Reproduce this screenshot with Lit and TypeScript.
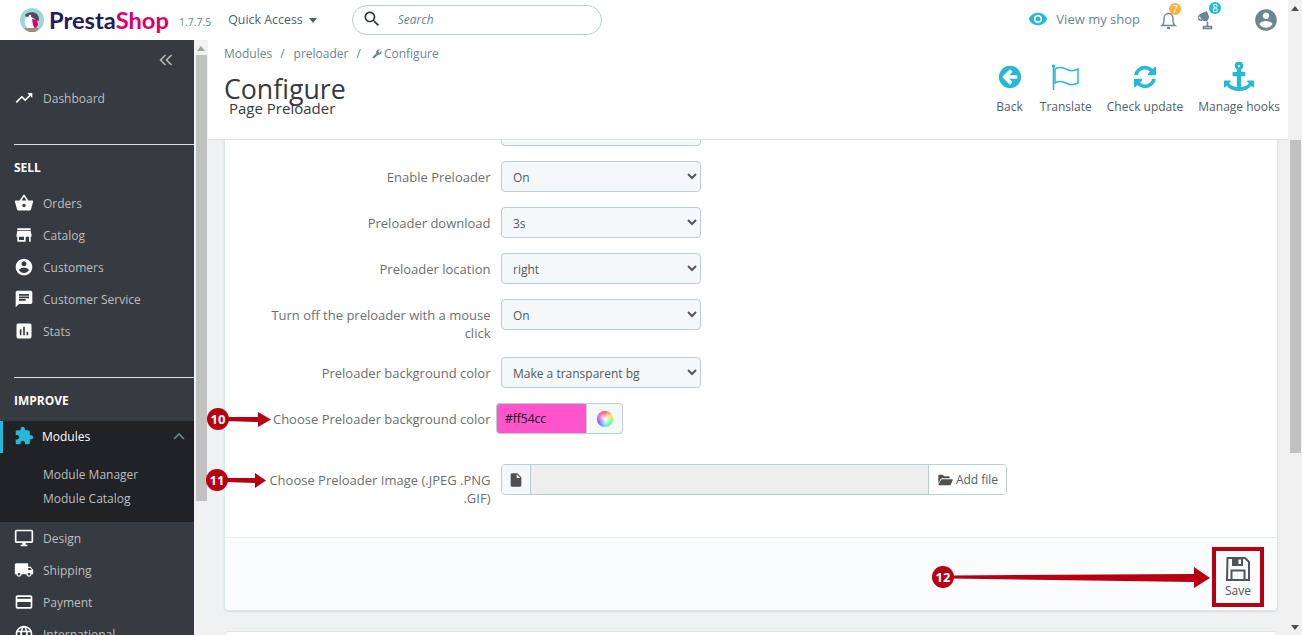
import { LitElement, html, css } from 'lit';
import { customElement } from 'lit/decorators.js';

const icon = (d: string, size = 20, box = 24) =>
  html`<svg class="ic" width=${size} height=${size} viewBox="0 0 ${box} ${box}" fill="currentColor"><path d=${d}></path></svg>`;

const P = {
  trend: 'M16 6l2.29 2.29-4.88 4.88-4-4L2 16.59 3.41 18l6-6 4 4 6.3-6.29L22 12V6z',
  basket: 'M17.21 9l-4.38-6.56c-.19-.28-.51-.42-.83-.42-.32 0-.64.14-.83.43L6.79 9H2c-.55 0-1 .45-1 1 0 .09.01.18.04.27l2.54 9.27c.23.84 1 1.46 1.92 1.46h13c.92 0 1.69-.62 1.93-1.46l2.54-9.27L23 10c0-.55-.45-1-1-1h-4.79zM9 9l3-4.4L15 9H9zm3 8c-1.1 0-2-.9-2-2s.9-2 2-2 2 .9 2 2-.9 2-2 2z',
  store: 'M20 4H4v2h16V4zm1 10v-2l-1-5H4l-1 5v2h1v6h10v-6h4v6h2v-6h1zm-9 4H6v-4h6v4z',
  account: 'M12 2C6.48 2 2 6.48 2 12s4.48 10 10 10 10-4.48 10-10S17.52 2 12 2zm0 3c1.66 0 3 1.34 3 3s-1.34 3-3 3-3-1.34-3-3 1.34-3 3-3zm0 14.2c-2.5 0-4.71-1.28-6-3.22.03-1.99 4-3.08 6-3.08 1.99 0 5.97 1.09 6 3.08-1.29 1.94-3.5 3.22-6 3.22z',
  chat: 'M20 2H4c-1.1 0-1.99.9-1.99 2L2 22l4-4h14c1.1 0 2-.9 2-2V4c0-1.1-.9-2-2-2zM6 9h12v2H6V9zm8 5H6v-2h8v2zm4-6H6V6h12v2z',
  stats: 'M19 3H5c-1.1 0-2 .9-2 2v14c0 1.1.9 2 2 2h14c1.1 0 2-.9 2-2V5c0-1.1-.9-2-2-2zM9 17H7v-7h2v7zm4 0h-2V7h2v10zm4 0h-2v-4h2v4z',
  puzzle: 'M20.5 11H19V7c0-1.1-.9-2-2-2h-4V3.5C13 2.12 11.88 1 10.5 1S8 2.12 8 3.5V5H4c-1.1 0-1.99.9-1.99 2v3.8H3.5c1.49 0 2.7 1.21 2.7 2.7s-1.21 2.7-2.7 2.7H2V20c0 1.1.9 2 2 2h3.8v-1.5c0-1.49 1.21-2.7 2.7-2.7 1.49 0 2.7 1.21 2.7 2.7V22H17c1.1 0 2-.9 2-2v-4h1.5c1.38 0 2.5-1.12 2.5-2.5S21.88 11 20.5 11z',
  desktop: 'M21 2H3c-1.1 0-2 .9-2 2v12c0 1.1.9 2 2 2h7v2H8v2h8v-2h-2v-2h7c1.1 0 2-.9 2-2V4c0-1.1-.9-2-2-2zm0 14H3V4h18v12z',
  truck: 'M20 8h-3V4H3c-1.1 0-2 .9-2 2v11h2c0 1.66 1.34 3 3 3s3-1.34 3-3h6c0 1.66 1.34 3 3 3s3-1.34 3-3h2v-5l-3-4zM6 18.5c-.83 0-1.5-.67-1.5-1.5s.67-1.5 1.5-1.5 1.5.67 1.5 1.5-.67 1.5-1.5 1.5zm13.5-9l1.96 2.5H17V9.5h2.5zm-1.5 9c-.83 0-1.5-.67-1.5-1.5s.67-1.5 1.5-1.5 1.5.67 1.5 1.5-.67 1.5-1.5 1.5z',
  card: 'M20 4H4c-1.11 0-1.99.89-1.99 2L2 18c0 1.11.89 2 2 2h16c1.11 0 2-.89 2-2V6c0-1.11-.89-2-2-2zm0 14H4v-6h16v6zm0-10H4V6h16v2z',
  globe: 'M11.99 2C6.47 2 2 6.48 2 12s4.47 10 9.99 10C17.52 22 22 17.52 22 12S17.52 2 11.99 2zm6.93 6h-2.95c-.32-1.25-.78-2.45-1.38-3.56 1.84.63 3.37 1.91 4.33 3.56zM12 4.04c.83 1.2 1.48 2.53 1.91 3.96h-3.82c.43-1.43 1.08-2.76 1.91-3.96zM4.26 14C4.1 13.36 4 12.69 4 12s.1-1.36.26-2h3.38c-.08.66-.14 1.32-.14 2 0 .68.06 1.34.14 2H4.26zm.82 2h2.95c.32 1.25.78 2.45 1.38 3.56-1.84-.63-3.37-1.9-4.33-3.56zm2.95-8H5.08c.96-1.66 2.49-2.93 4.33-3.56C8.81 5.55 8.35 6.75 8.03 8zM12 19.96c-.83-1.2-1.48-2.53-1.91-3.96h3.82c-.43 1.43-1.08 2.76-1.91 3.96zM14.34 14H9.66c-.09-.66-.16-1.32-.16-2 0-.68.07-1.35.16-2h4.68c.09.65.16 1.32.16 2 0 .68-.07 1.34-.16 2zm.25 5.56c.6-1.11 1.06-2.31 1.38-3.56h2.95c-.96 1.65-2.49 2.93-4.33 3.56zM16.36 14c.08-.66.14-1.32.14-2 0-.68-.06-1.34-.14-2h3.38c.16.64.26 1.31.26 2s-.1 1.36-.26 2h-3.38z',
  eye: 'M12 4.5C7 4.5 2.73 7.61 1 12c1.73 4.39 6 7.5 11 7.5s9.27-3.11 11-7.5c-1.73-4.39-6-7.5-11-7.5zM12 17c-2.76 0-5-2.24-5-5s2.24-5 5-5 5 2.24 5 5-2.24 5-5 5zm0-8c-1.66 0-3 1.34-3 3s1.34 3 3 3 3-1.34 3-3-1.34-3-3-3z',
  search: 'M15.5 14h-.79l-.28-.27C15.41 12.59 16 11.11 16 9.5 16 5.91 13.09 3 9.5 3S3 5.91 3 9.5 5.91 16 9.5 16c1.61 0 3.09-.59 4.23-1.57l.27.28v.79l5 4.99L20.49 19l-4.99-5zm-6 0C7.01 14 5 11.99 5 9.5S7.01 5 9.5 5 14 7.01 14 9.5 11.99 14 9.5 14z',
  wrench: 'M1.3 19l9.1-9.1c-.9-2.3-.4-5 1.5-6.9 2-2 5-2.4 7.4-1.3L15 6l3 3 4.4-4.3c1.2 2.4.7 5.4-1.3 7.4-1.9 1.9-4.6 2.4-6.9 1.5l-9.1 9.1c-.4.4-1 .4-1.4 0l-2.3-2.3c-.5-.4-.5-1.1-.1-1.4z',
  file: 'M6 2c-1.1 0-1.99.9-1.99 2L4 20c0 1.1.89 2 1.99 2H18c1.1 0 2-.9 2-2V8l-6-6H6zm7 7V3.5L18.5 9H13z',
  folder: 'M2 5.5C2 4.7 2.7 4 3.5 4h5l2 2.5h7c.8 0 1.5.7 1.5 1.5v1.5H7.5c-1 0-1.9.6-2.300 1.500L2 17.500zM7.500 11H23c.6 0 .9.6.7 1.100l-3.200 7c-.2.5-.7.900-1.300.900H2.800c-.6 0-1-.6-.7-1.100l4-7.100c.3-.5.800-.800 1.400-.800z',
  back: 'M1408 960v-128q0-26-18.500-45t-45.500-19h-502l189-189q19-19 19-45t-19-45l-91-91q-18-18-45-18t-45 18l-362 362-91 91q-18 18-18 45t18 45l91 91 362 362q18 18 45 18t45-18l91-91q18-18 18-45t-18-45l-189-189h502q26 0 45-19t19-45zm256-64q0 209-103 385.500t-279.500 279.500-385.500 103-385.500-103-279.500-279.500-103-385.500 103-385.500 279.500-279.500 385.500-103 385.500 103 279.500 279.500 103 385.500z',
  refresh: 'M1639 1056q0 5-1 7-64 268-268 434.500t-478 166.500q-146 0-282.500-55t-243.500-157l-129 129q-19 19-45 19t-45-19-19-45v-448q0-26 19-45t45-19h448q26 0 45 19t19 45-19 45l-137 137q71 66 161 102t187 36q134 0 250-65t186-179q11-17 53-117 8-23 30-23h192q13 0 22.500 9.500t9.500 22.500zm25-800v448q0 26-19 45t-45 19h-448q-26 0-45-19t-19-45 19-45l138-138q-148-137-349-137-134 0-250 65t-186 179q-11 17-53 117-8 23-30 23h-199q-13 0-22.500-9.500t-9.500-22.500v-7q65-268 270-434.500t480-166.500q146 0 284 55.500t245 156.500l130-129q19-19 45-19t45 19 19 45z',
  anchor: 'M960 256q0-26-19-45t-45-19-45 19-19 45 19 45 45 19 45-19 19-45zm832 888v352q0 22-20 30-8 2-12 2-12 0-23-9l-93-93q-119 143-318.500 226.500t-429.500 83.500-429.500-83.500-318.500-226.500l-93 93q-9 9-23 9-4 0-12-2-20-8-20-30v-352q0-14 9-23t23-9h352q22 0 30 20 8 19-7 35l-100 100q67 91 189.500 153.500t271.500 82.500v-647h-192q-26 0-45-19t-19-45v-128q0-26 19-45t45-19h192v-163q-58-34-93-92.500t-35-128.500q0-106 75-181t181-75 181 75 75 181q0 70-35 128.500t-93 92.500v163h192q26 0 45 19t19 45v128q0 26-19 45t-45 19h-192v647q149-20 271.500-82.500t189.500-153.500l-100-100q-15-16-7-35 8-20 30-20h352q14 0 23 9t9 23z',
};

const sell = [
  ['Orders', P.basket],
  ['Catalog', P.store],
  ['Customers', P.account],
  ['Customer Service', P.chat],
  ['Stats', P.stats],
];
const after = [
  ['Design', P.desktop],
  ['Shipping', P.truck],
  ['Payment', P.card],
  ['International', P.globe],
];

@customElement('app-root')
export class AppRoot extends LitElement {
  static styles = css`
    :host {
      display: block;
      width: 1302px;
      height: 635px;
      overflow: hidden;
      position: relative;
      font-family: 'Open Sans', 'Noto Sans', sans-serif;
      font-size: 13px;
      color: #6c868e;
      background: #eff1f2;
    }
    .ic { display: block; flex: none; }
    .page { display: flex; height: 635px; }
    .left { flex: 1; min-width: 0; display: flex; flex-direction: column; }

    .top {
      height: 40px;
      flex: none;
      background: #fff;
      display: flex;
      align-items: center;
      padding-left: 20px;
      box-sizing: border-box;
    }
    .bird { width: 24px; height: 24px; flex: none; }
    .word {
      font-family: Lato, sans-serif;
      font-weight: 700;
      font-size: 23.7px;
      line-height: 40px;
      color: #251b5b;
      margin-left: 5px;
    }
    .word b { font-weight: 700; color: #df0067; }
    .ver { font-size: 10.5px; color: #6c868e; margin-left: 10px; margin-top: 4px; }
    .quick { font-size: 12.4px; color: #4f6169; margin-left: 17px; padding-bottom: 2px; display: flex; align-items: center; gap: 6px; }
    .caret { width: 0; height: 0; border: 4px solid transparent; border-top: 5px solid #4f6169; border-bottom: 0; margin-top: 2px; }
    .search {
      margin-left: 35px;
      width: 250px;
      height: 30px;
      box-sizing: border-box;
      border: 1px solid #bbcdd2;
      border-radius: 15px;
      display: flex;
      align-items: center;
      padding: 0 0 2px 9px;
      color: #363a41;
    }
    .search em { font-size: 12px; color: #6c868e; margin-left: 16px; }
    .top-right { margin-left: auto; display: flex; align-items: center; padding-right: 9px; }
    .shop { display: flex; align-items: center; gap: 8px; color: #6c868e; font-size: 13px; padding-bottom: 2px; }
    .shop .ic { color: #25b9d7; }
    .notif { position: relative; color: #6c868e; }
    .bell { margin-left: 20px; }
    .cup { margin-left: 20px; }
    .avatar { margin-left: 39px; color: #6c868e; }
    .badge {
      position: absolute;
      width: 12px;
      height: 12px;
      border-radius: 50%;
      color: #fff;
      font-size: 10px;
      line-height: 12px;
      text-align: center;
    }
    .badge.orange { background: #fbaf3c; left: 9px; top: -7px; }
    .badge.blue { background: #25b9d7; left: 11px; top: -8px; }

    .main { flex: 1; min-height: 0; display: flex; }
    .side { width: 194px; flex: none; background: #363a41; color: #bebebe; overflow: hidden; font-size: 12px; }
    .collapse { height: 42px; display: flex; justify-content: flex-end; align-items: flex-start; padding: 14px 21px 0 0; box-sizing: border-box; color: #bebebe; }
    .item { height: 32px; display: flex; align-items: center; padding-left: 14px; gap: 9px; color: #bebebe; }
    .item .ic { color: #fff; }
    .rule { height: 1px; background: #d8e2e6; margin: 30px 0 0 14px; }
    .title { padding: 15px 0 11px 14px; font-size: 12px; line-height: 16px; font-weight: 700; color: #fff; }
    .title.second { padding-bottom: 12px; }
    .active { background: #202226; color: #fff; border-left: 3px solid #25b9d7; padding: 0 0 2px 11px; box-sizing: border-box; gap: 8px; }
    .active .ic { color: #25b9d7; }
    .active .chev { margin-left: auto; margin-right: 9px; color: #6c868e; }
    .sub { background: #202226; padding: 10px 0 11px 43px; }
    .sub div { height: 24px; line-height: 24px; color: #bebebe; }

    .sbar { width: 14px; flex: none; background: #f1f1f1; position: relative; }
    .thumb { background: #c1c1c1; position: absolute; left: 2px; right: 1px; }
    .thumb.side-thumb { top: 15px; height: 446px; }
    .thumb.page-thumb { top: 140px; height: 313px; }
    .tri { position: absolute; left: 3px; width: 0; height: 0; border-left: 4px solid transparent; border-right: 4px solid transparent; }
    .tri.up { top: 6px; border-bottom: 5px solid #a3a3a3; }
    .tri.up.dark { border-bottom-color: #505050; }
    .tri.down { bottom: 5px; border-top: 5px solid #505050; }

    .content { flex: 1; min-width: 0; display: flex; flex-direction: column; }
    .toolbar {
      height: 100px;
      flex: none;
      box-sizing: border-box;
      background: #fff;
      border-bottom: 1px solid #dfe3e5;
      padding: 0 8px 0 16px;
      display: flex;
      justify-content: space-between;
      position: relative;
      z-index: 1;
    }
    .crumbs { display: flex; align-items: center; height: 27px; font-size: 12px; color: #6c868e; }
    .crumbs i { font-style: normal; margin: 0 9px 0 8px; }
    .crumbs .ic { margin: 0 2px 0 2px; }
    h1 { margin: 5px 0 0; font-size: 26.7px; font-weight: 400; line-height: 34px; color: #363a41; }
    .subtitle { margin: -8px 0 0 5px; font-size: 15px; line-height: 20px; color: #363a41; }
    .actions { display: flex; gap: 15px; padding-top: 24px; }
    .action { display: flex; flex-direction: column; align-items: center; gap: 9px; font-size: 12px; line-height: 16px; color: #4f6169; }
    .action.first { margin-right: 2px; }
    .action .art { height: 26px; display: flex; align-items: center; color: #25b9d7; }

    .scroll { flex: 1; min-height: 0; overflow: hidden; padding: 0 10px 0 16px; }
    .card {
      background: #fff;
      border: 1px solid #dbe6e9;
      border-top: 0;
      border-radius: 0 0 5px 5px;
      box-shadow: 0 1px 2px rgba(0, 0, 0, 0.1);
    }
    .form { padding: 0 0 15px 40.5px; margin-top: -25px; }
    .row { display: flex; gap: 10.5px; margin-bottom: 15px; }
    .row label { width: 225px; flex: none; padding-top: 7px; line-height: 18px; text-align: right; color: #6c6f72; }
    .row select {
      width: 200px;
      height: 31px;
      box-sizing: border-box;
      border: 1px solid #bbcdd2;
      border-radius: 4px;
      background-color: #f5f8f9;
      padding: 2px 7px 0;
      font: inherit;
      font-size: 12px;
      color: #50585c;
    }
    .row.tall { margin-bottom: 30px; }
    .color { display: flex; height: 31px; margin-left: -5px; }
    .color input {
      width: 90px;
      height: 31px;
      box-sizing: border-box;
      border: 1px solid #bbcdd2;
      border-right: 0;
      border-radius: 4px 0 0 4px;
      background: #ff54cc;
      padding: 0 8px;
      font: inherit;
      font-size: 12px;
      color: #111;
    }
    .wheel-btn {
      width: 37px;
      box-sizing: border-box;
      border: 1px solid #bbcdd2;
      border-radius: 0 4px 4px 0;
      background: #f5f8f9;
      display: flex;
      align-items: center;
      justify-content: center;
    }
    .wheel {
      width: 16px;
      height: 16px;
      border-radius: 50%;
      background: radial-gradient(circle, #fff 0, rgba(255, 255, 255, 0) 70%),
        conic-gradient(#ff4d4d, #ffe14d, #4dff6a, #4de1ff, #5a4dff, #ff4dd8, #ff4d4d);
    }
    .upload {
      display: flex;
      width: 506px;
      height: 31px;
      box-sizing: border-box;
      border: 1px solid #bbcdd2;
      border-radius: 4px;
      overflow: hidden;
    }
    .upload .ico { width: 28px; flex: none; background: #f5f8f9; border-right: 1px solid #bbcdd2; display: flex; align-items: center; justify-content: center; color: #505050; }
    .upload .path { flex: 1; background: #eeeeee; }
    .upload .add { width: 77px; flex: none; border-left: 1px solid #bbcdd2; background: #fff; display: flex; align-items: center; justify-content: center; gap: 3px; font-size: 12px; color: #4f6169; }
    .upload .add .ic { color: #505050; }
    .footer {
      height: 73px;
      box-sizing: border-box;
      background: #fafbfc;
      border-top: 1px solid #e6eaec;
      border-radius: 0 0 5px 5px;
      display: flex;
      justify-content: flex-end;
      padding: 19px 26px 0 0;
    }
    .save { display: flex; flex-direction: column; align-items: center; font-size: 12px; line-height: 16px; color: #4f5559; gap: 2px; }
    .save .ic { color: #4f5559; }
    .next { height: 30px; margin-top: 20px; background: #fff; border: 1px solid #dbe6e9; border-radius: 5px; }

    .marks { position: absolute; left: 0; top: 0; pointer-events: none; }
    .marks text { font-family: 'Open Sans', sans-serif; font-size: 13px; font-weight: 700; fill: #fff; text-anchor: middle; }
  `;

  renderLogo() {
    return html`<svg class="bird" viewBox="0 0 24 24">
      <circle cx="12" cy="12" r="12" fill="#9fd3de"></circle>
      <path d="M5 7c2-3 9-4 12-1 2 2 2 5 2 7l-3-1-4-3-5 1z" fill="#4a4f57"></path>
      <path d="M5 11c0-2 3-3 6-2l3 2 2 5-1 5H9c-3-2-5-6-4-10z" fill="#fff"></path>
      <path d="M12 11l5 1 1 5-3 4-2-4z" fill="#df0067"></path>
      <path d="M4 20h15l-1 2-3 2H9l-3-2z" fill="#a08f78"></path>
      <circle cx="10" cy="8" r="1.200" fill="#fff"></circle>
    </svg>`;
  }

  renderToolbar() {
    return html`<div class="toolbar">
      <div>
        <div class="crumbs">
          Modules<i>/</i>preloader<i>/</i>${icon(P.wrench, 10)}Configure
        </div>
        <h1>Configure</h1>
        <div class="subtitle">Page Preloader</div>
      </div>
      <div class="actions">
        <div class="action first"><span class="art">${icon(P.back, 26, 1792)}</span>Back</div>
        <div class="action">
          <span class="art"><svg class="ic" width="28" height="26" viewBox="0 0 28 26" fill="none" stroke="currentColor">
            <path d="M1.500 1v25" stroke-width="1.600"></path>
            <circle cx="1.500" cy="2" r="1.600" fill="currentColor" stroke="none"></circle>
            <path d="M3 5c5-3 9-1 12 .5s7 1.500 11-.5v14c-4 2-8 2-11 .5S8 16 3 19z" stroke-width="1.500"></path>
          </svg></span>Translate
        </div>
        <div class="action"><span class="art">${icon(P.refresh, 26, 1792)}</span>Check update</div>
        <div class="action"><span class="art">${icon(P.anchor, 30, 1792)}</span>Manage hooks</div>
      </div>
    </div>`;
  }

  renderForm() {
    const row = (label: string, value: string, options: string[] = [value]) =>
      html`<div class="row">
        <label>${label}</label>
        <select>${options.map((o) => html`<option ?selected=${o === value}>${o}</option>`)}</select>
      </div>`;
    return html`<div class="form">
      ${row('Preloader type', 'Default')}
      ${row('Enable Preloader', 'On', ['On', 'Off'])}
      ${row('Preloader download', '3s', ['1s', '2s', '3s'])}
      ${row('Preloader location', 'right', ['left', 'right'])}
      ${row('Turn off the preloader with a mouse click', 'On', ['On', 'Off'])}
      ${row('Preloader background color', 'Make a transparent bg')}
      <div class="row tall">
        <label>Choose Preloader background color</label>
        <div class="color">
          <input value="#ff54cc" />
          <div class="wheel-btn"><span class="wheel"></span></div>
        </div>
      </div>
      <div class="row">
        <label>Choose Preloader Image (.JPEG .PNG .GIF)</label>
        <div class="upload">
          <span class="ico">${icon(P.file, 16)}</span>
          <span class="path"></span>
          <span class="add">${icon(P.folder, 16)}Add file</span>
        </div>
      </div>
    </div>`;
  }

  renderMarks() {
    const red = '#b80013';
    return html`<svg class="marks" width="1302" height="635" viewBox="0 0 1302 635">
      <rect x="1214" y="549" width="48" height="56" fill="none" stroke=${red} stroke-width="4"></rect>
      <g fill=${red}>
        <circle cx="218" cy="419" r="11"></circle>
        <path d="M226 417L258 417V412L271 419.500 258 427V422L226 421z"></path>
        <circle cx="217" cy="480" r="11"></circle>
        <path d="M225 478L255 478V473L266 480.500 255 488V483L225 482z"></path>
        <circle cx="943" cy="577" r="11"></circle>
        <path d="M950 575.500L1194 574V567L1210 578 1194 588V582L950 578.500z"></path>
      </g>
      <text x="218" y="423.500">10</text>
      <text x="217" y="484.500">11</text>
      <text x="943" y="581.500">12</text>
    </svg>`;
  }

  render() {
    return html`<div class="page">
        <div class="left">
          <div class="top">
            ${this.renderLogo()}
            <span class="word">Presta<b>Shop</b></span>
            <span class="ver">1.7.7.5</span>
            <span class="quick">Quick Access <span class="caret"></span></span>
            <div class="search">${icon(P.search, 20)}<em>Search</em></div>
            <div class="top-right">
              <span class="shop">${icon(P.eye, 20)}View my shop</span>
              <span class="notif bell">
                <svg class="ic" width="18" height="20" viewBox="0 0 18 20" fill="none" stroke="currentColor" stroke-width="1.400">
                  <path d="M2 15.500c1.500-1 2-2 2-4.500V8.500C4 5.500 6 3.500 8.500 3.500S13 5.500 13 8.500V11c0 2.500.5 3.500 2 4.500z"></path>
                  <path d="M7 18h3" stroke-width="2"></path>
                </svg>
                <span class="badge orange">7</span>
              </span>
              <span class="notif cup">
                <svg class="ic" width="16" height="20" viewBox="0 0 16 20" fill="none" stroke="currentColor" stroke-width="1.600">
                  <g transform="rotate(-24 8 9)">
                    <path d="M3.500 2h8.500v4c0 3-2 5-4.250 5S3.500 9 3.500 6z" fill="currentColor" stroke="none"></path>
                    <path d="M3.500 3.500H1c0 3 1 4.500 3 5"></path>
                  </g>
                  <path d="M9.500 11.500v4.500"></path>
                  <path d="M5.500 16.500h8v2h-8z"></path>
                </svg>
                <span class="badge blue">8</span>
              </span>
              <span class="avatar">${icon(P.account, 26)}</span>
            </div>
          </div>
          <div class="main">
            <nav class="side">
              <div class="collapse">
                <svg class="ic" width="14" height="12" viewBox="0 0 14 12" fill="none" stroke="currentColor" stroke-width="1.500">
                  <path d="M6.500 1L1.500 6l5 5M12.500 1l-5 5 5 5"></path>
                </svg>
              </div>
              <div class="item">${icon(P.trend)}Dashboard</div>
              <div class="rule"></div>
              <div class="title">SELL</div>
              ${sell.map(([t, d]) => html`<div class="item">${icon(d)}${t}</div>`)}
              <div class="rule"></div>
              <div class="title second">IMPROVE</div>
              <div class="item active">
                ${icon(P.puzzle)}Modules
                <svg class="ic chev" width="12" height="8" viewBox="0 0 12 8" fill="none" stroke="currentColor" stroke-width="1.600"><path d="M1 7l5-5 5 5"></path></svg>
              </div>
              <div class="sub"><div>Module Manager</div><div>Module Catalog</div></div>
              ${after.map(([t, d]) => html`<div class="item">${icon(d)}${t}</div>`)}
            </nav>
            <div class="sbar">
              <span class="tri up"></span>
              <div class="thumb side-thumb"></div>
            </div>
            <div class="content">
              ${this.renderToolbar()}
              <div class="scroll">
                <div class="card">
                  ${this.renderForm()}
                  <div class="footer">
                    <div class="save">
                      <svg class="ic" width="24" height="24" viewBox="0 0 24 24" fill="none" stroke="currentColor" stroke-width="2">
                        <path d="M1.500 1h17.500l4 4v18H1z"></path>
                        <path d="M6 1h11v8H6z" fill="currentColor" stroke="none"></path>
                        <path d="M12.500 2.500h2.500v4.500h-2.500z" fill="#fafbfc" stroke="none"></path>
                        <path d="M5.500 22.500v-9h13v9"></path>
                      </svg>
                      Save
                    </div>
                  </div>
                </div>
                <div class="next"></div>
              </div>
            </div>
          </div>
        </div>
        <div class="sbar">
          <span class="tri up dark"></span>
          <div class="thumb page-thumb"></div>
          <span class="tri down"></span>
        </div>
      </div>
      ${this.renderMarks()}`;
  }
}
